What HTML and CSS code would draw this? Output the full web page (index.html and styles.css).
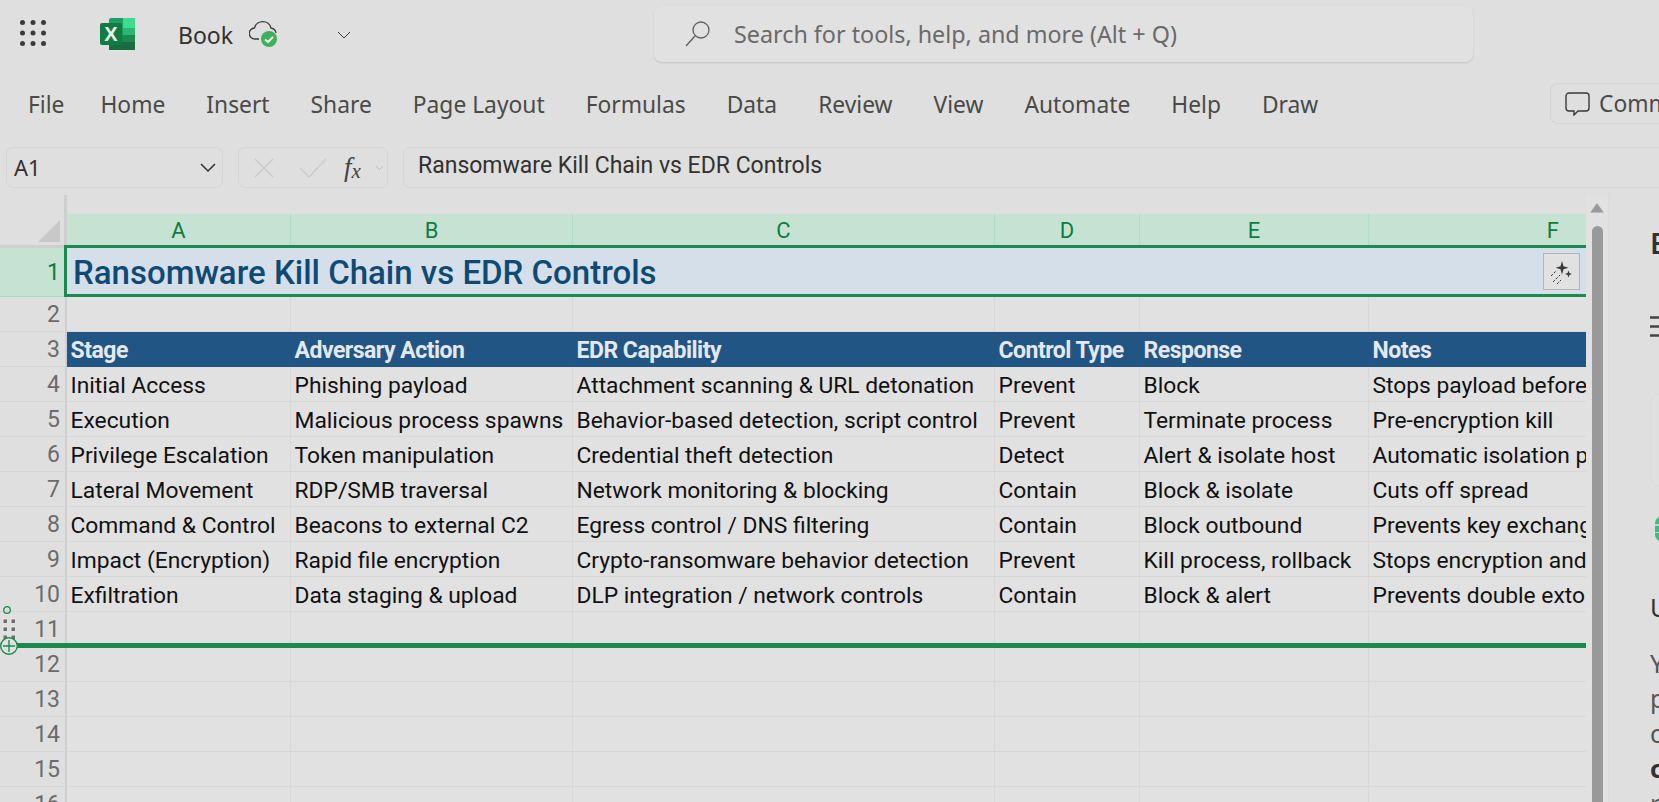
FILE: index.html
```html
<!DOCTYPE html>
<html lang="en">
<head>
  <meta charset="UTF-8" />
  <title>Book - Excel</title>
  <link rel="stylesheet" href="styles.css">
</head>
<body>

  <!-- Title bar -->
  <div class="topbar">
    <svg class="waffle" width="30" height="30" viewBox="0 0 30 30" fill="#3b3a39">
      <circle cx="3.500" cy="2.500" r="2.500"/><circle cx="14" cy="2.500" r="2.500"/><circle cx="24.500" cy="2.500" r="2.500"/>
      <circle cx="3.500" cy="13" r="2.500"/><circle cx="14" cy="13" r="2.500"/><circle cx="24.500" cy="13" r="2.500"/>
      <circle cx="3.500" cy="23.500" r="2.500"/><circle cx="14" cy="23.500" r="2.500"/><circle cx="24.500" cy="23.500" r="2.500"/>
    </svg>
    <svg class="logo" width="35" height="32" viewBox="0 0 35 32">
      <rect x="9" width="26" height="32" rx="2" fill="#1f9e62"/>
      <rect x="23" width="12" height="10" fill="#3ddc8f"/>
      <rect x="23" y="10" width="12" height="7" fill="#2bb673"/>
      <rect x="9" y="17" width="26" height="7" fill="#1a8a4f"/>
      <rect x="9" y="24" width="26" height="8" fill="#1b6b40"/>
      <rect y="5" width="22" height="22" rx="2" fill="#107c41"/>
      <text class="logo-x" x="11" y="22.500" text-anchor="middle">X</text>
    </svg>
    <span class="doc-name">Book</span>
    <svg class="cloud" width="30" height="30" viewBox="0 0 30 30">
      <path d="M10 19H6a5.500 5.500 0 0 1-.5-11A8.500 8.500 0 0 1 22 8a6 6 0 0 1 5 5" fill="none" stroke="#3b3a39" stroke-width="1.300"/>
      <circle cx="20" cy="19" r="8" fill="#3cb05a"/>
      <path d="M16 19.500l3 2.500 5-5" fill="none" stroke="#fff" stroke-width="1.800"/>
    </svg>
    <svg class="caret" width="16" height="10" viewBox="0 0 16 10"><path d="M2 2l6 6 6-6" fill="none" stroke="#3b3a39" stroke-width="1"/></svg>
    <div class="search">
      <svg width="28" height="28" viewBox="0 0 28 28"><circle cx="17" cy="10" r="8" fill="none" stroke="#605e5c" stroke-width="1.300"/><path d="M11 16L2 26" stroke="#605e5c" stroke-width="1.300"/></svg>
      <span>Search for tools, help, and more (Alt + Q)</span>
    </div>
  </div>

  <!-- Ribbon tabs -->
  <div class="ribbon">
    <a class="first">File</a><a>Home</a><a>Insert</a><a>Share</a><a>Page Layout</a><a>Formulas</a>
    <a>Data</a><a>Review</a><a>View</a><a>Automate</a><a>Help</a><a>Draw</a>
    <div class="comments">
      <svg width="25" height="24" viewBox="0 0 25 24"><path d="M4 1h17a3 3 0 0 1 3 3v12a3 3 0 0 1-3 3h-8l-4 4v-4H4a3 3 0 0 1-3-3V4a3 3 0 0 1 3-3z" fill="none" stroke="#3b3a39" stroke-width="1.400"/></svg>
      <span>Comments</span>
    </div>
  </div>

  <!-- Formula bar -->
  <div class="formula-bar">
    <div class="name-box">
      <span>A1</span>
      <svg width="16" height="10" viewBox="0 0 16 10"><path d="M1 1l7 7 7-7" fill="none" stroke="#323130" stroke-width="1.500"/></svg>
    </div>
    <div class="fx-box">
      <svg width="20" height="20" viewBox="0 0 20 20"><path d="M1 1l18 18M19 1L1 19" stroke="#cbcbcb" stroke-width="1.500"/></svg>
      <svg class="fx-check" width="28" height="20" viewBox="0 0 28 20"><path d="M1 10l9 9L27 1" fill="none" stroke="#cbcbcb" stroke-width="1.500"/></svg>
      <i class="fx">f<span>x</span></i>
      <svg class="fx-caret" width="9" height="6" viewBox="0 0 9 6"><path d="M1 1l3.500 3.500L8 1" fill="none" stroke="#bdbdbd" stroke-width="1"/></svg>
    </div>
    <div class="formula-input">Ransomware Kill Chain vs EDR Controls</div>
  </div>

  <div class="workspace">
    <div class="sheet">
      <div class="grid">
        <div class="corner"><svg width="22" height="22" viewBox="0 0 22 22"><path d="M22 0v22H0z" fill="#c8c8c8"/></svg></div>
        <div class="col-head">A</div><div class="col-head">B</div><div class="col-head">C</div>
        <div class="col-head">D</div><div class="col-head">E</div><div class="col-head col-f">F</div>

        <div class="row-head sel">1</div>
        <div class="title-row">Ransomware Kill Chain vs EDR Controls</div>

        <div class="row-head">2</div>
        <div class="cell"></div><div class="cell"></div><div class="cell"></div><div class="cell"></div><div class="cell"></div><div class="cell"></div>

        <div class="row-head">3</div>
        <div class="cell hd">Stage</div><div class="cell hd">Adversary Action</div><div class="cell hd">EDR Capability</div>
        <div class="cell hd">Control Type</div><div class="cell hd">Response</div><div class="cell hd">Notes</div>

        <div class="row-head">4</div>
        <div class="cell">Initial Access</div><div class="cell">Phishing payload</div><div class="cell">Attachment scanning &amp; URL detonation</div>
        <div class="cell">Prevent</div><div class="cell">Block</div><div class="cell">Stops payload before</div>

        <div class="row-head">5</div>
        <div class="cell">Execution</div><div class="cell">Malicious process spawns</div><div class="cell">Behavior-based detection, script control</div>
        <div class="cell">Prevent</div><div class="cell">Terminate process</div><div class="cell">Pre-encryption kill</div>

        <div class="row-head">6</div>
        <div class="cell">Privilege Escalation</div><div class="cell">Token manipulation</div><div class="cell">Credential theft detection</div>
        <div class="cell">Detect</div><div class="cell">Alert &amp; isolate host</div><div class="cell">Automatic isolation p</div>

        <div class="row-head">7</div>
        <div class="cell">Lateral Movement</div><div class="cell">RDP/SMB traversal</div><div class="cell">Network monitoring &amp; blocking</div>
        <div class="cell">Contain</div><div class="cell">Block &amp; isolate</div><div class="cell">Cuts off spread</div>

        <div class="row-head">8</div>
        <div class="cell">Command &amp; Control</div><div class="cell">Beacons to external C2</div><div class="cell">Egress control / DNS filtering</div>
        <div class="cell">Contain</div><div class="cell">Block outbound</div><div class="cell">Prevents key exchang</div>

        <div class="row-head">9</div>
        <div class="cell">Impact (Encryption)</div><div class="cell">Rapid file encryption</div><div class="cell">Crypto-ransomware behavior detection</div>
        <div class="cell">Prevent</div><div class="cell">Kill process, rollback</div><div class="cell">Stops encryption and</div>

        <div class="row-head">10</div>
        <div class="cell">Exfiltration</div><div class="cell">Data staging &amp; upload</div><div class="cell">DLP integration / network controls</div>
        <div class="cell">Contain</div><div class="cell">Block &amp; alert</div><div class="cell">Prevents double exto</div>

        <div class="row-head">11</div>
        <div class="cell"></div><div class="cell"></div><div class="cell"></div><div class="cell"></div><div class="cell"></div><div class="cell"></div>
        <div class="row-head">12</div>
        <div class="cell"></div><div class="cell"></div><div class="cell"></div><div class="cell"></div><div class="cell"></div><div class="cell"></div>
        <div class="row-head">13</div>
        <div class="cell"></div><div class="cell"></div><div class="cell"></div><div class="cell"></div><div class="cell"></div><div class="cell"></div>
        <div class="row-head">14</div>
        <div class="cell"></div><div class="cell"></div><div class="cell"></div><div class="cell"></div><div class="cell"></div><div class="cell"></div>
        <div class="row-head">15</div>
        <div class="cell"></div><div class="cell"></div><div class="cell"></div><div class="cell"></div><div class="cell"></div><div class="cell"></div>
        <div class="row-head">16</div>
        <div class="cell"></div><div class="cell"></div><div class="cell"></div><div class="cell"></div><div class="cell"></div><div class="cell"></div>
      </div>

      <!-- things that sit over the grid -->
      <div class="selection"></div>
      <div class="sparkle">
        <svg width="28" height="28" viewBox="0 0 28 28" fill="#3b3a39">
          <path d="M14 3l1.500 5.200L20.500 9.700l-5 1.500L14 16.500l-1.500-5.300-5-1.500 5-1.500z"/>
          <path d="M20.500 12.500l.9 2.600 2.600.9-2.600.9-.9 2.600-.9-2.600-2.600-.9 2.600-.9z"/>
          <path d="M3 18l5-5M5 24l7-7M9 26l4-4" stroke="#3b3a39" stroke-width="1" stroke-dasharray="2.500 1.500" fill="none"/>
        </svg>
      </div>
      <div class="insert-line"></div>
      <svg class="insert-handle" width="20" height="50" viewBox="0 0 20 50">
        <circle cx="7" cy="4" r="3.300" fill="none" stroke="#1a8a4f" stroke-width="1.300"/>
        <g fill="#6e6e6e"><rect x="3.500" y="13.500" width="3.500" height="3.500"/><rect x="11.500" y="13.500" width="3.500" height="3.500"/><rect x="3.500" y="21.500" width="3.500" height="3.500"/><rect x="11.500" y="21.500" width="3.500" height="3.500"/><rect x="3.500" y="29.500" width="3.500" height="3.500"/><rect x="11.500" y="29.500" width="3.500" height="3.500"/></g>
        <circle cx="9" cy="40" r="8.300" fill="#e1e1e1" stroke="#1a8a4f" stroke-width="1.400"/>
        <path d="M9 34v12M3 40h12" stroke="#1a8a4f" stroke-width="1.400"/>
      </svg>
    </div>

    <div class="scrollbar">
      <svg width="16" height="12" viewBox="0 0 16 12"><path d="M8 1l7 10H1z" fill="#9a9a9a"/></svg>
      <div class="thumb"></div>
    </div>

    <!-- side pane, cut off by the window edge -->
    <div class="side-pane">
      <div class="pane-title">E</div>
      <svg class="pane-menu" width="12" height="21" viewBox="0 0 12 21"><path d="M0 1.500h12M0 10.500h12M0 19.500h12" stroke="#444" stroke-width="2.500"/></svg>
      <div class="pane-card"></div>
      <div class="pane-chip"></div>
      <div class="pane-head">U</div>
      <p class="pane-text">Y<br>p<br>c<br><b>c</b><br>r</p>
    </div>
  </div>

</body>
</html>
```

FILE: styles.css
```css
* {
  margin: 0;
  padding: 0;
  box-sizing: border-box;
}

body {
  width: 1659px;
  height: 802px;
  overflow: hidden;
  background: #dfdfdf;
  color: #323130;
  font-family: "Noto Sans", "Open Sans", sans-serif;
}

.topbar {
  height: 70px;
  display: flex;
  align-items: center;
}

.waffle {
  margin-left: 19px;
}

.logo {
  margin-left: 51px;
  margin-top: -3px;
}

.logo-x {
  font-family: "Liberation Sans", sans-serif;
  font-size: 20px;
  font-weight: 700;
  fill: #e8f3ec;
}

.doc-name {
  margin-left: 43px;
  font-size: 23px;
}

.cloud {
  margin-left: 16px;
}

.caret {
  margin-left: 57px;
}

.search {
  margin-left: 302px;
  width: 819px;
  height: 56px;
  margin-top: -3px;
  padding-left: 30px;
  display: flex;
  align-items: center;
  gap: 22px;
  background: #e1e1e1;
  border-radius: 8px;
  box-shadow: 0 1px 2px rgba(0,0,0,0.12);
  color: #6b6a69;
  font-size: 23.300px;
  white-space: nowrap;
}

.ribbon {
  height: 73px;
  padding: 0 0 5px 28px;
  display: flex;
  align-items: center;
  gap: 41px;
  font-size: 22.800px;
  color: #4a4a48;
  white-space: nowrap;
}

.ribbon .first {
  margin-right: -5px;
}

.comments {
  margin-left: auto;
  margin-bottom: 1px;
  flex-shrink: 0;
  width: 109px;
  height: 41px;
  padding-left: 14px;
  display: flex;
  align-items: center;
  gap: 9px;
  overflow: hidden;
  border: 1px solid #d4d4d4;
  border-right: none;
  border-radius: 8px 0 0 8px;
}

.comments svg {
  flex-shrink: 0;
}

.formula-bar {
  height: 52px;
  padding: 4px 0 0 6px;
  display: flex;
  gap: 15px;
  align-items: flex-start;
}

.name-box, .fx-box, .formula-input {
  height: 41px;
  display: flex;
  align-items: center;
  border: 1px solid #d6d6d6;
  border-radius: 7px;
}

.name-box {
  width: 217px;
  padding: 0 6px 0 7px;
  justify-content: space-between;
  font-size: 22px;
  color: #323130;
}

.name-box span {
  margin-bottom: 2px;
}

.fx-box {
  width: 150px;
  padding-left: 15px;
}

.fx-check {
  margin-left: 25px;
}

.fx {
  margin-left: 17px;
  width: 20px;
  font-family: "Liberation Serif", serif;
  font-size: 27px;
  color: #444;
}

.fx span {
  font-size: 21px;
  vertical-align: -2px;
}

.fx-caret {
  margin-left: 11px;
}

.formula-input {
  flex: 1;
  border-right: none;
  border-radius: 7px 0 0 7px;
  padding: 0 0 5px 14px;
  font-size: 23px;
  font-family: Roboto, sans-serif;
  color: #323130;
}

.workspace {
  display: flex;
  height: 607px;
}

.sheet {
  width: 1586px;
  overflow: hidden;
  position: relative;
}

.grid {
  display: grid;
  grid-template-columns: 67px 224px 282px 422px 145px 229px 218px;
  grid-template-rows: 34px 49px repeat(15, 35px);
  font-family: Roboto, sans-serif;
  margin-top: 19px;
  background: #e1e1e1;
}

.corner {
  background: #dfdfdf;
  border-right: 3px solid #cfcfcf;
  border-bottom: 3px solid #cfcfcf;
  display: flex;
  justify-content: flex-end;
  align-items: flex-end;
  padding: 0 4px 3px 0;
  margin-top: -19px;
  height: 53px;
}

.col-head {
  background: #c5e2d3;
  color: #107c41;
  font-size: 22px;
  text-align: center;
  line-height: 34px;
  border-right: 1px solid #b2dcc6;
}

.col-f {
  border-right: none;
  text-align: right;
  padding-right: 28px;
}

.row-head {
  border-right: 2px solid #cfcfcf;
  border-bottom: 1px solid #d6d6d6;
  background: #dfdfdf;
  color: #6b6b6b;
  font-size: 23px;
  text-align: right;
  padding-right: 5px;
  line-height: 35px;
}

.row-head.sel {
  background: #c5e2d3;
  color: #107c41;
  line-height: 50px;
  border-bottom: 1px solid #a5dcbc;
}

.title-row {
  grid-column: 2 / 8;
  background: #d5dfe9;
  color: #0e4a73;
  font-size: 33px;
  font-weight: 500;
  line-height: 50px;
  padding-left: 6px;
  white-space: nowrap;
}

.cell {
  border-right: 1px solid #d8d8d8;
  border-bottom: 1px solid #d8d8d8;
  font-size: 22.800px;
  line-height: 34px;
  padding: 2px 0 0 3.500px;
  color: #111;
  white-space: nowrap;
  overflow: hidden;
}

.cell.hd {
  background: #215583;
  color: #e4e8ee;
  font-size: 23px;
  font-weight: 700;
  border-color: #215583;
  letter-spacing: -0.5px;
}

.selection {
  position: absolute;
  left: 64px;
  top: 50px;
  width: 1530px;
  height: 52px;
  border: 3px solid #1a8a4f;
}

.sparkle {
  position: absolute;
  left: 1543px;
  top: 58px;
  width: 37px;
  height: 37px;
  border: 1px solid #b4b4b4;
  background: #e1e1e1;
  display: flex;
  align-items: center;
  justify-content: center;
}

.insert-line {
  position: absolute;
  left: 8px;
  right: 0;
  top: 448px;
  height: 5px;
  background: #1a8a4f;
}

.insert-handle {
  position: absolute;
  left: 0;
  top: 411px;
}

.scrollbar {
  width: 22px;
  padding-top: 7px;
  background: #e1e1e1;
  display: flex;
  flex-direction: column;
  gap: 12px;
  align-items: center;
}

.thumb {
  width: 11px;
  height: 600px;
  border-radius: 6px 6px 0 0;
  background: #999;
}

.side-pane {
  flex: 1;
  position: relative;
  padding-left: 41px;
  border-left: 1px solid #dcdcdc;
  overflow: hidden;
}

.pane-title {
  margin-top: 29px;
  font-size: 28px;
  line-height: 38px;
  font-weight: 600;
}

.pane-menu {
  display: block;
  margin-top: 54px;
}

.pane-card {
  position: absolute;
  left: 41px;
  top: 198px;
  width: 60px;
  height: 94px;
  border: 1px solid #dbdbdb;
  border-radius: 10px;
}

.pane-chip {
  position: absolute;
  left: 46px;
  top: 322px;
  width: 20px;
  height: 24px;
  border-radius: 6px;
  background: linear-gradient(#3dbd7d 30%, #a8e0c0 30% 36%, #3dbd7d 36% 62%, #a8e0c0 62% 68%, #3dbd7d 68%);
}

.pane-head {
  margin-top: 253px;
  font-size: 25px;
  line-height: 34px;
}

.pane-text {
  margin-top: 22px;
  font-size: 25px;
  line-height: 35px;
  color: #555;
}

.pane-text b {
  font-weight: 700;
  color: #323130;
}
```
